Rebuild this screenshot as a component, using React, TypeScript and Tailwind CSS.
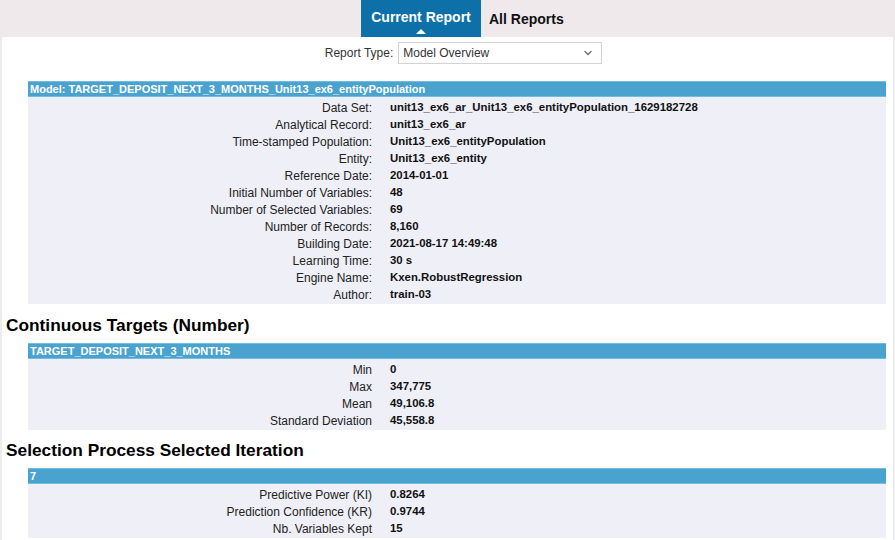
import { FiChevronDown } from "react-icons/fi";

type Row = [string, string];

const modelRows: Row[] = [
  ["Data Set:", "unit13_ex6_ar_Unit13_ex6_entityPopulation_1629182728"],
  ["Analytical Record:", "unit13_ex6_ar"],
  ["Time-stamped Population:", "Unit13_ex6_entityPopulation"],
  ["Entity:", "Unit13_ex6_entity"],
  ["Reference Date:", "2014-01-01"],
  ["Initial Number of Variables:", "48"],
  ["Number of Selected Variables:", "69"],
  ["Number of Records:", "8,160"],
  ["Building Date:", "2021-08-17 14:49:48"],
  ["Learning Time:", "30 s"],
  ["Engine Name:", "Kxen.RobustRegression"],
  ["Author:", "train-03"],
];

const targetRows: Row[] = [
  ["Min", "0"],
  ["Max", "347,775"],
  ["Mean", "49,106.8"],
  ["Standard Deviation", "45,558.8"],
];

const iterationRows: Row[] = [
  ["Predictive Power (KI)", "0.8264"],
  ["Prediction Confidence (KR)", "0.9744"],
  ["Nb. Variables Kept", "15"],
];

const InfoTable = ({ title, rows }: { title: string; rows: Row[] }) => (
  <div className="ml-[26px] mr-[7px]">
    {/* table header */}
    <div className="h-[16px] bg-[#4aa3cf] border-y border-[#74bbe0] px-[2px] text-[11px] leading-[14px] font-bold text-white">
      {title}
    </div>
    {/* table rows */}
    <div className="bg-[#efeff7] pt-[2px] pb-[1px]">
      {rows.map(([label, value]) => (
        <div key={label} className="flex h-[17px] items-center text-[12px]">
          <div className="w-[344px] shrink-0 text-right text-[#222]">{label}</div>
          <div className="pl-[18px] text-[11.4px] font-bold text-[#111]">{value}</div>
        </div>
      ))}
    </div>
  </div>
);

const App = () => {
  return (
    <div
      className="w-[895px] h-[540px] overflow-hidden bg-white"
      style={{ fontFamily: '"Liberation Sans", Arial, sans-serif' }}
    >
      {/* Tabs bar */}
      <nav className="flex h-[37px] bg-[#efe9ec] pl-[361px]">
        <div className="relative flex w-[120px] items-start justify-center bg-[#0e70a9] pt-[7px] text-[14px] font-bold text-white">
          Current Report
          <span className="absolute bottom-[3px] left-1/2 -translate-x-1/2 border-x-[5px] border-b-[5px] border-x-transparent border-b-white" />
        </div>
        <div className="flex items-start pl-[8px] pt-[9px] text-[14px] font-bold text-[#111]">
          All Reports
        </div>
      </nav>

      {/* Page body */}
      <div className="h-[503px] border-x-2 border-[#ececec]">
        {/* Report type picker */}
        <div className="flex items-center justify-center gap-[5px] pt-[5px] pl-[32px]">
          <span className="text-[12px] text-[#333]">Report Type:</span>
          <div className="flex h-[22px] w-[204px] items-center justify-between border border-[#d3d3d3] pl-[4px] pr-[7px] text-[12px] text-[#333]">
            Model Overview
            <FiChevronDown className="text-[12px] text-[#777]" strokeWidth={3} />
          </div>
        </div>

        <div className="mt-[17px]">
          <InfoTable
            title="Model: TARGET_DEPOSIT_NEXT_3_MONTHS_Unit13_ex6_entityPopulation"
            rows={modelRows}
          />
        </div>

        <h2 className="mt-[11px] mb-[8px] pl-[4px] text-[17.3px] font-bold leading-[20px] text-black">
          Continuous Targets (Number)
        </h2>
        <InfoTable title="TARGET_DEPOSIT_NEXT_3_MONTHS" rows={targetRows} />

        <h2 className="mt-[10px] mb-[8px] pl-[4px] text-[17.3px] font-bold leading-[20px] text-black">
          Selection Process Selected Iteration
        </h2>
        <InfoTable title="7" rows={iterationRows} />
      </div>
    </div>
  );
};

export default App;
